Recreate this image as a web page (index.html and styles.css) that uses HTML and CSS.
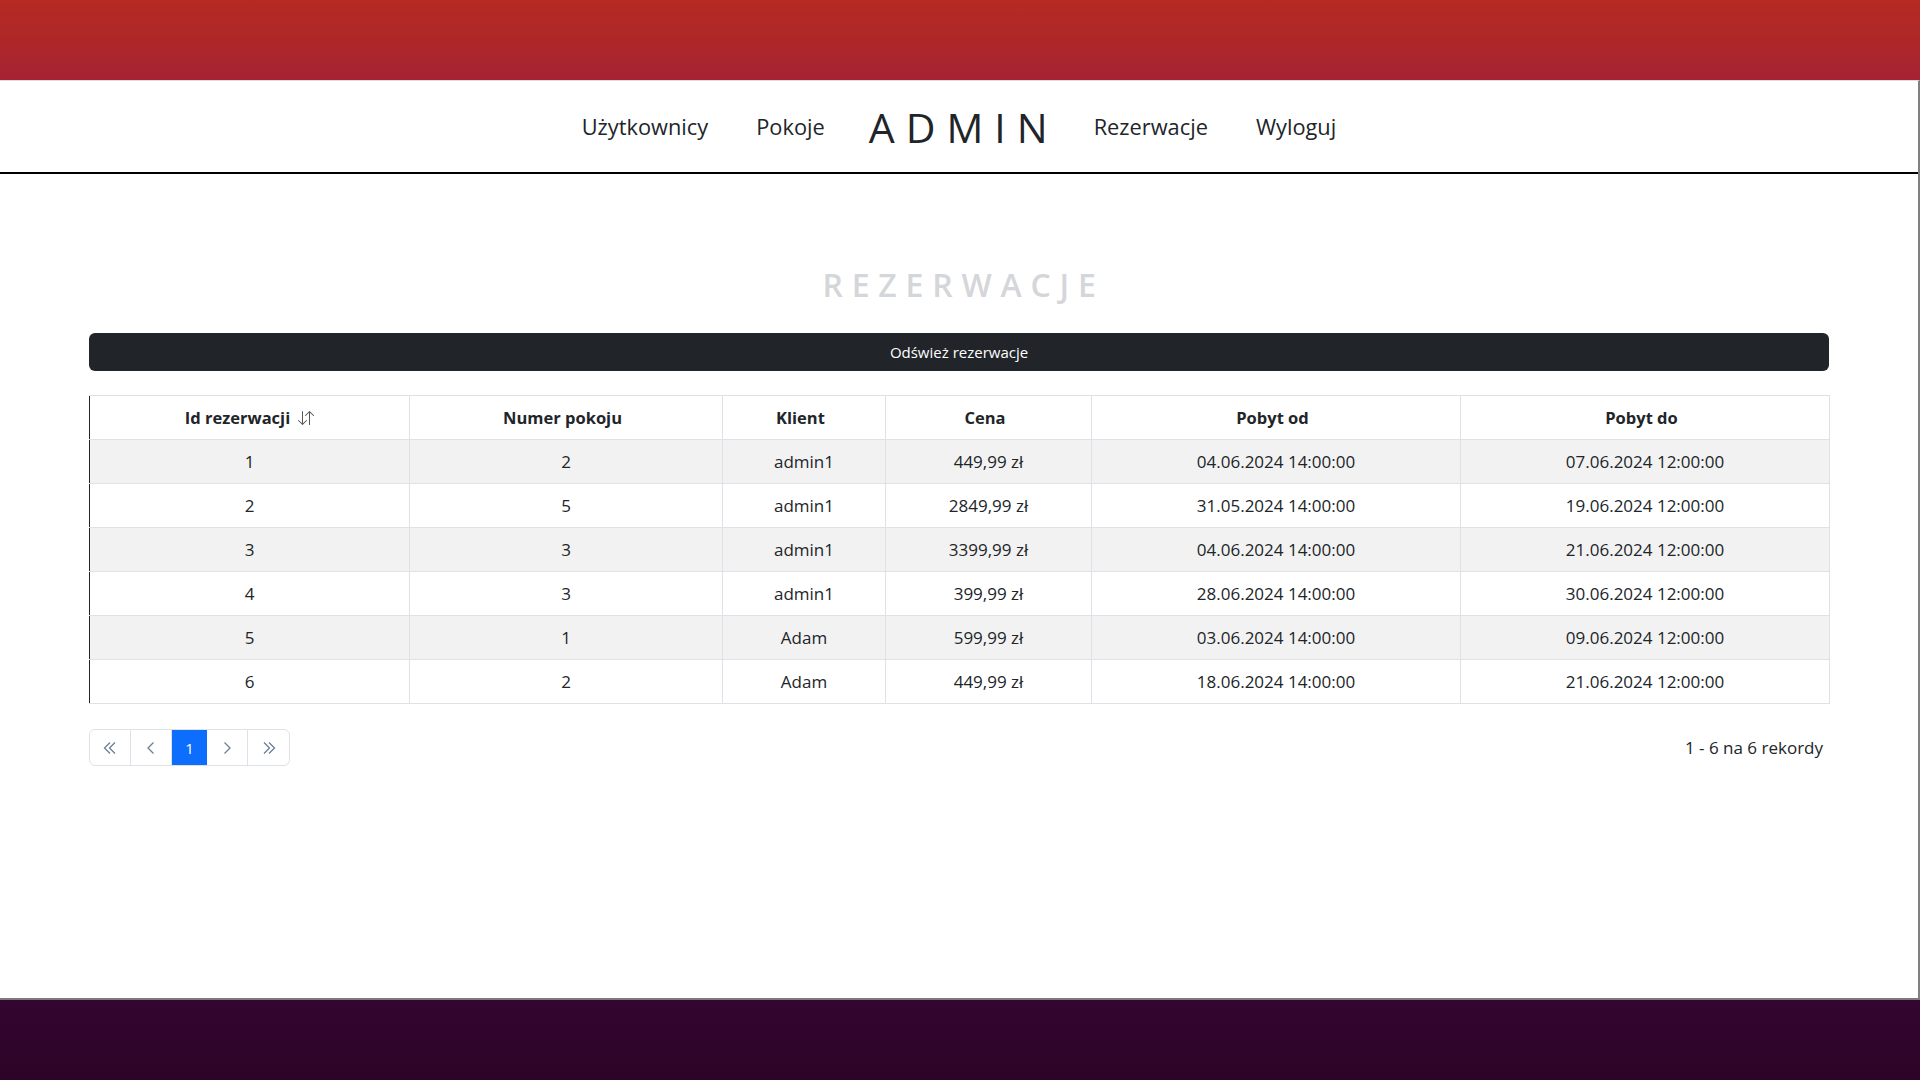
FILE: index.html
```html
<!DOCTYPE html>
<html lang="pl">
<head>
<meta charset="utf-8">
<title>Rezerwacje - Admin</title>
<link rel="stylesheet" href="styles.css">
</head>
<body>
<div class="page">
  <div class="band-top"></div>
  <div class="panel">
    <nav class="nav">
      <a class="nav-link">Użytkownicy</a>
      <a class="nav-link">Pokoje</a>
      <span class="brand">ADMIN</span>
      <a class="nav-link">Rezerwacje</a>
      <a class="nav-link">Wyloguj</a>
    </nav>
    <main class="content">
      <h1 class="title">REZERWACJE</h1>
      <button class="btn-refresh">Odśwież rezerwacje</button>
      <table class="grid">
        <colgroup>
          <col class="c1"><col class="c2"><col class="c3"><col class="c4"><col class="c5"><col class="c6">
        </colgroup>
        <thead>
          <tr>
            <th class="th-first"><span class="th-sort">Id rezerwacji
              <svg class="sort-icon" viewBox="0 0 16 16" width="16" height="16"><path fill="currentColor" fill-rule="evenodd" d="M11.5 15a.5.5 0 0 0 .5-.5V2.707l3.146 3.147a.5.5 0 0 0 .708-.708l-4-4a.5.5 0 0 0-.708 0l-4 4a.5.5 0 1 0 .708.708L11 2.707V14.5a.5.5 0 0 0 .5.5m-7-14a.5.5 0 0 1 .5.5v11.793l3.146-3.147a.5.5 0 0 1 .708.708l-4 4a.5.5 0 0 1-.708 0l-4-4a.5.5 0 0 1 .708-.708L4 13.293V1.5a.5.5 0 0 1 .5-.5"/></svg>
            </span></th>
            <th>Numer pokoju</th>
            <th>Klient</th>
            <th>Cena</th>
            <th>Pobyt od</th>
            <th>Pobyt do</th>
          </tr>
        </thead>
        <tbody>
          <tr><td>1</td><td>2</td><td>admin1</td><td>449,99 zł</td><td>04.06.2024 14:00:00</td><td>07.06.2024 12:00:00</td></tr>
          <tr><td>2</td><td>5</td><td>admin1</td><td>2849,99 zł</td><td>31.05.2024 14:00:00</td><td>19.06.2024 12:00:00</td></tr>
          <tr><td>3</td><td>3</td><td>admin1</td><td>3399,99 zł</td><td>04.06.2024 14:00:00</td><td>21.06.2024 12:00:00</td></tr>
          <tr><td>4</td><td>3</td><td>admin1</td><td>399,99 zł</td><td>28.06.2024 14:00:00</td><td>30.06.2024 12:00:00</td></tr>
          <tr><td>5</td><td>1</td><td>Adam</td><td>599,99 zł</td><td>03.06.2024 14:00:00</td><td>09.06.2024 12:00:00</td></tr>
          <tr><td>6</td><td>2</td><td>Adam</td><td>449,99 zł</td><td>18.06.2024 14:00:00</td><td>21.06.2024 12:00:00</td></tr>
        </tbody>
      </table>
      <div class="pager-row">
        <div class="pager">
          <span class="pg"><svg viewBox="0 0 16 16" width="16" height="16"><path d="M8 2.5 2.5 8 8 13.5M13 2.5 7.5 8 13 13.5" fill="none" stroke="currentColor" stroke-width="1.3"/></svg></span>
          <span class="pg"><svg viewBox="0 0 16 16" width="16" height="16"><path d="M10.5 2.5 5 8 10.5 13.5" fill="none" stroke="currentColor" stroke-width="1.3"/></svg></span>
          <span class="pg pg-active">1</span>
          <span class="pg"><svg viewBox="0 0 16 16" width="16" height="16"><path d="M5.5 2.5 11 8 5.5 13.5" fill="none" stroke="currentColor" stroke-width="1.3"/></svg></span>
          <span class="pg pg-last"><svg viewBox="0 0 16 16" width="16" height="16"><path d="M3 2.5 8.5 8 3 13.5M8 2.5 13.5 8 8 13.5" fill="none" stroke="currentColor" stroke-width="1.3"/></svg></span>
        </div>
        <div class="records">1 - 6 na 6 rekordy</div>
      </div>
    </main>
  </div>
  <div class="band-bottom"></div>
</div>
</body>
</html>
```
FILE: styles.css
```css
* { box-sizing: border-box; }
html, body { margin: 0; padding: 0; }
body {
  font-family: "Open Sans", "Noto Sans", "Liberation Sans", sans-serif;
  color: #212529;
  background: #2e0429;
}
.page {
  height: 1080px;
  display: flex;
  flex-direction: column;
  overflow: hidden;
}
.band-top {
  height: 80px;
  flex: 0 0 80px;
  background: linear-gradient(180deg, #b52a22 0%, #ae2728 50%, #a52334 100%);
}
.band-bottom {
  height: 80px;
  flex: 0 0 80px;
  background: linear-gradient(180deg, #33052f 0%, #2d0428 100%);
}
.panel {
  flex: 1 1 auto;
  background: #fff;
  border-top: 1px solid #dcdcdc;
  border-right: 2px solid #808080;
  border-bottom: 2px solid #7a7a7a;
  display: flex;
  flex-direction: column;
}
.nav {
  height: 93px;
  border-bottom: 2px solid #000;
  display: flex;
  align-items: center;
  justify-content: center;
  gap: 48px;
  padding-left: 0;
}
.nav-link {
  font-size: 21.8px;
  font-weight: 500;
  color: #212529;
  text-decoration: none;
  line-height: 28px;
  padding-top: 0;
}
.brand {
  font-size: 41px;
  letter-spacing: 11px;
  margin: 0 -13px 0 -4px;
  color: #212529;
  line-height: 50px;
}
.content {
  width: 1740px;
  margin: 0 auto;
  padding-top: 91px;
}
.title {
  margin: 0;
  text-align: center;
  font-size: 32px;
  line-height: 40px;
  font-weight: 600;
  letter-spacing: 8.8px;
  padding-left: 9px;
  color: #d4d6d9;
}
.btn-refresh {
  display: block;
  width: 100%;
  height: 38px;
  margin-top: 28px;
  border: 0;
  border-radius: 6px;
  background: #212529;
  color: #fff;
  font-family: inherit;
  font-size: 15px;
}
.grid {
  margin-top: 24px;
  width: 1740px;
  border-collapse: collapse;
  table-layout: fixed;
  font-size: 17px;
}
.c1 { width: 320px; }
.c2 { width: 313px; }
.c3 { width: 163px; }
.c4 { width: 206px; }
.c5 { width: 369px; }
.c6 { width: 369px; }
.grid th, .grid td {
  border: 1px solid #dee2e6;
  text-align: center;
  padding: 9px 8px;
  line-height: 25px;
  height: 44px;
}
.grid th {
  font-weight: 700;
  font-size: 16.5px;
  padding-right: 15px;
}
.grid th.th-first { padding-right: 8px; }
.grid tr > :first-child { border-left: 1px solid #212529; }
.grid tbody tr:nth-child(odd) td { background: #f2f2f2; }
.th-sort {
  display: inline-flex;
  align-items: center;
  gap: 8px;
}
.sort-icon { color: #555; }
.pager-row {
  margin-top: 25px;
  display: flex;
  justify-content: space-between;
  align-items: center;
}
.pager {
  display: flex;
  height: 37px;
  border: 1px solid #dee2e6;
  border-radius: 6px;
  overflow: hidden;
}
.pg {
  width: 41px;
  display: flex;
  align-items: center;
  justify-content: center;
  border-right: 1px solid #dee2e6;
  color: #6c7f94;
  font-size: 15px;
}
.pg-last { border-right: 0; }
.pg-active {
  width: 35px;
  background: #0d6efd;
  color: #fff;
  border-right: 0;
}
.records {
  font-size: 17px;
  padding-right: 6px;
  color: #212529;
}
```
